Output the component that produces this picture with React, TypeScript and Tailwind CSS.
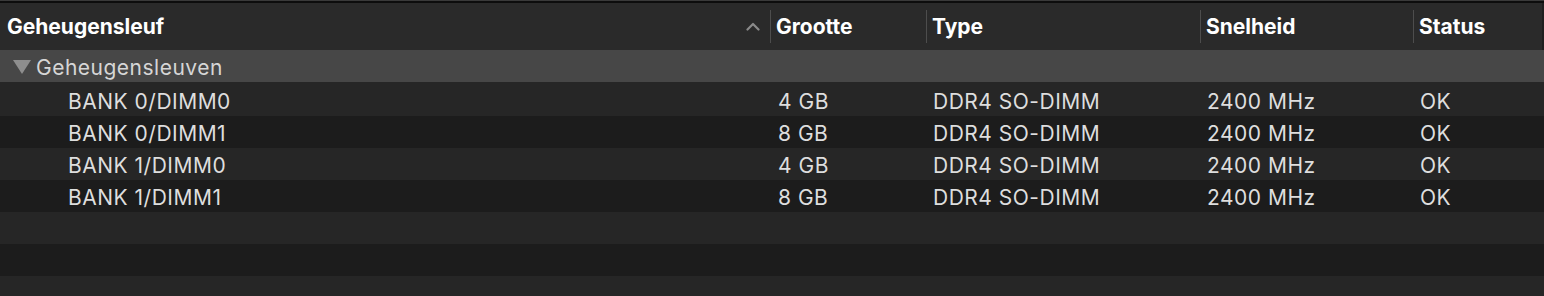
import React from "react";

const rows = [
  ["BANK 0/DIMM0", "4 GB", "DDR4 SO-DIMM", "2400 MHz", "OK"],
  ["BANK 0/DIMM1", "8 GB", "DDR4 SO-DIMM", "2400 MHz", "OK"],
  ["BANK 1/DIMM0", "4 GB", "DDR4 SO-DIMM", "2400 MHz", "OK"],
  ["BANK 1/DIMM1", "8 GB", "DDR4 SO-DIMM", "2400 MHz", "OK"],
];

const cols = "grid grid-cols-[770px_156px_274px_213px_1fr]";

function HeaderCell({ label }: { label: string }) {
  return (
    <div className="flex items-center h-full">
      <div className="w-px h-[33px] bg-[#4d4d4d] self-center" />
      <span className="pl-[5px] text-white font-bold text-[21px]">{label}</span>
    </div>
  );
}

export default function App() {
  return (
    <div className="w-[1544px] h-[296px] overflow-hidden bg-[#1c1c1c] flex flex-col" style={{ fontFamily: "Inter, 'Liberation Sans', sans-serif" }}>
      <div className="h-px bg-[#3a3a3a]" />
      <div className="h-[2px] bg-[#0d0d0d]" />
      <div className={`${cols} h-[47px] bg-[#2a2a2a] border-r-2 border-[#1f1f1f]`}>
        <div className="flex items-center h-full">
          <span className="pl-[7px] text-white font-bold text-[21px]">Geheugensleuf</span>
          <svg className="ml-auto mr-[10px]" width="14" height="9" viewBox="0 0 14 9">
            <path d="M1.5 7.5 L7 2 L12.5 7.5" stroke="#8a8a8a" strokeWidth="2.2" fill="none" strokeLinecap="round" strokeLinejoin="round" />
          </svg>
        </div>
        <HeaderCell label="Grootte" />
        <HeaderCell label="Type" />
        <HeaderCell label="Snelheid" />
        <HeaderCell label="Status" />
      </div>
      <div className="h-[32px] bg-[#474747] flex items-center">
        <svg className="ml-[13px] mt-[2px]" width="18" height="14" viewBox="0 0 18 14">
          <path d="M0 0 H18 L9 14 Z" fill="#8e8e8e" />
        </svg>
        <span className="ml-[5px] pt-[3px] text-[#d6d6d6] text-[21px] tracking-[0.5px]">Geheugensleuven</span>
      </div>
      {rows.map((r, i) => (
        <div key={i} className={`${cols} ${i === 0 ? "h-[34px] pt-[4px]" : "h-[32px] pt-[2px]"} ${i % 2 === 0 ? "bg-[#262626]" : "bg-[#1c1c1c]"} items-center text-[#dedede] text-[21px] tracking-[0.5px]`}>
          <span className="pl-[68px]">{r[0]}</span>
          <span className="pl-[8px]">{r[1]}</span>
          <span className="pl-[7px]">{r[2]}</span>
          <span className="pl-[7px]">{r[3]}</span>
          <span className="pl-[7px]">{r[4]}</span>
        </div>
      ))}
      <div className="h-[32px] bg-[#262626]" />
      <div className="h-[32px] bg-[#1c1c1c]" />
      <div className="flex-1 bg-[#262626]" />
    </div>
  );
}
